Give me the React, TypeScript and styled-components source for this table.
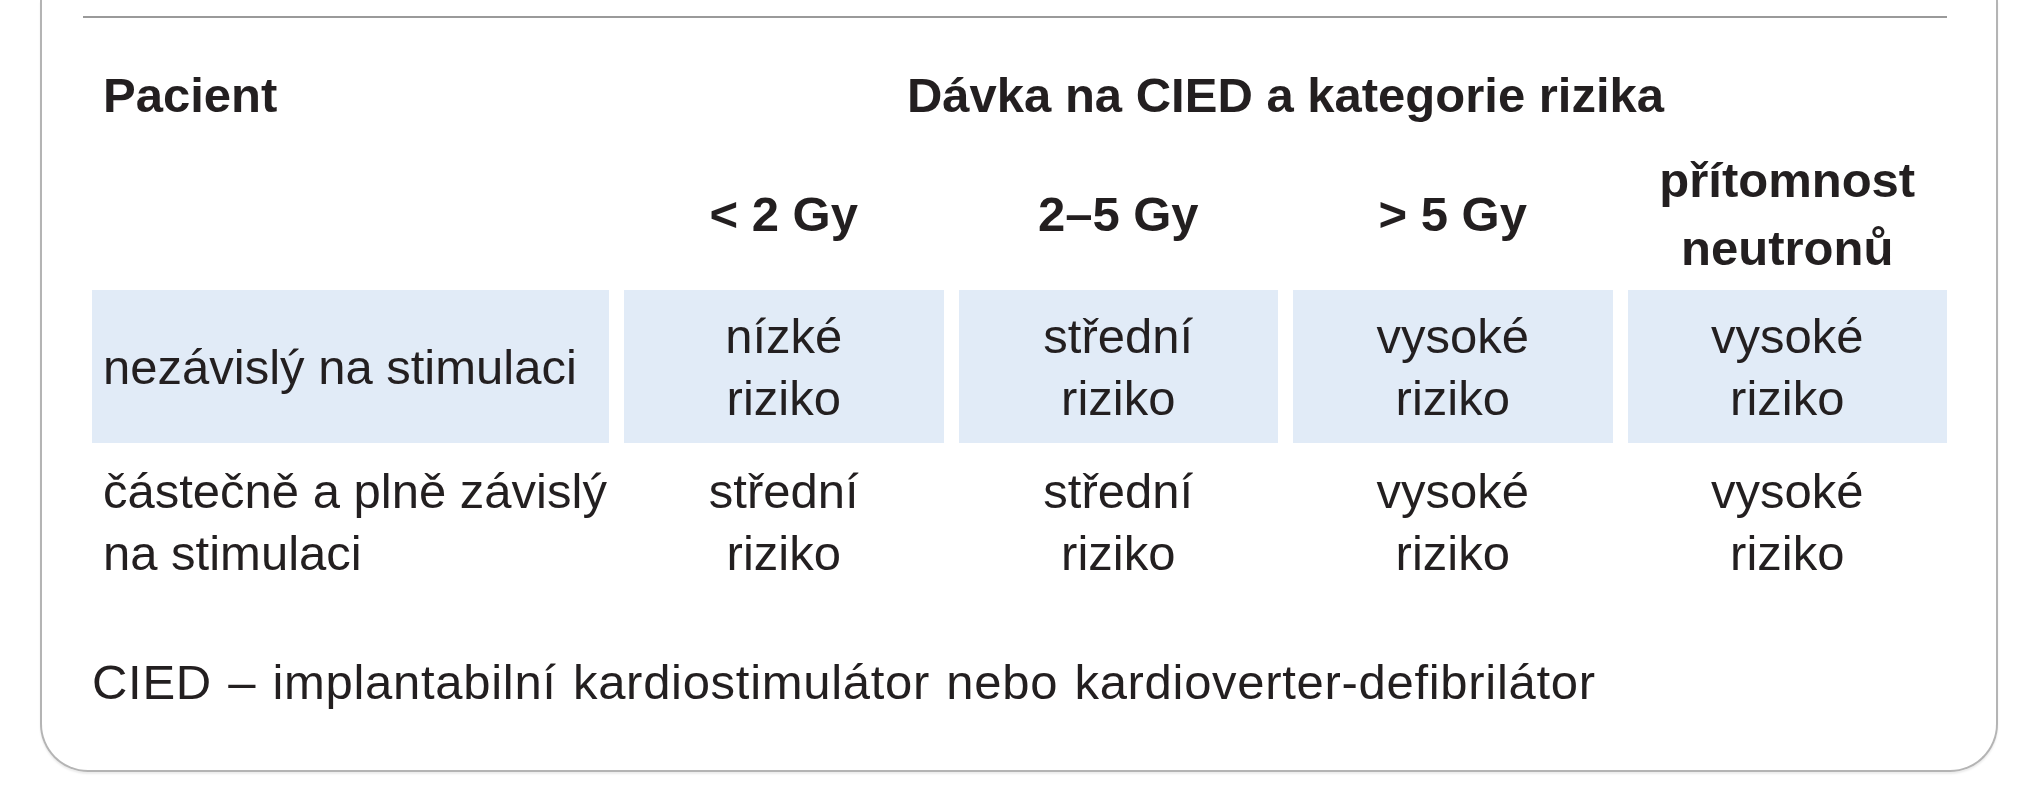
import React, { FC } from "react";
import styled, { createGlobalStyle } from "styled-components";

const GlobalStyle = createGlobalStyle`
  html, body {
    margin: 0;
    padding: 0;
    background: #ffffff;
  }
  body {
    font-family: "Liberation Sans", Arial, sans-serif;
    color: #231f20;
  }
`;

const Page = styled.div`
  width: 2019px;
  height: 800px;
  overflow: hidden;
  padding-left: 40px;
  box-sizing: border-box;
`;

const Box = styled.div`
  width: 1958px;
  box-sizing: border-box;
  border: 2px solid #b4b4b4;
  border-top: none;
  border-radius: 0 0 48px 48px;
  box-shadow: 0 2px 2px rgba(0, 0, 0, 0.08);
  padding: 16px 49px 57px 41px;
`;

const Rule = styled.div`
  height: 2px;
  background: #9a9a9a;
`;

const Table = styled.div`
  display: flex;
  flex-direction: column;
  margin-left: 9px;
`;

const Row = styled.div<{ $top: number }>`
  display: grid;
  grid-template-columns: 517px repeat(4, 1fr);
  column-gap: 15px;
  margin-top: ${(p) => p.$top}px;
`;

const HeadCell = styled.div<{ $span?: boolean; $center?: boolean }>`
  font-size: 49px;
  font-weight: 700;
  line-height: 62px;
  padding: 0 11px;
  text-align: ${(p) => (p.$center ? "center" : "left")};
  grid-column: ${(p) => (p.$span ? "2 / 6" : "auto")};
`;

const DoseCell = styled.div`
  font-size: 49px;
  font-weight: 700;
  line-height: 68px;
  min-height: 136px;
  display: flex;
  align-items: center;
  justify-content: center;
  text-align: center;
`;

const Cell = styled.div<{ $shaded?: boolean; $left?: boolean }>`
  font-size: 49px;
  line-height: 62px;
  padding: 14px ${(p) => (p.$left ? "0 14px 11px" : "11px")};
  min-height: 125px;
  display: flex;
  align-items: center;
  justify-content: ${(p) => (p.$left ? "flex-start" : "center")};
  text-align: ${(p) => (p.$left ? "left" : "center")};
  white-space: nowrap;
  background: ${(p) => (p.$shaded ? "#e1ebf7" : "transparent")};
`;

const Note = styled.p`
  margin: 53px 0 0 9px;
  font-size: 49px;
  line-height: 62px;
  word-spacing: 2px;
  letter-spacing: 0.7px;
`;

interface IRisk {
  patient: React.ReactNode;
  risks: string[];
  shaded: boolean;
}

const doses: React.ReactNode[] = [
  "< 2 Gy",
  "2–5 Gy",
  "> 5 Gy",
  <>
    přítomnost
    <br />
    neutronů
  </>,
];

const rows: IRisk[] = [
  {
    patient: "nezávislý na stimulaci",
    risks: ["nízké", "střední", "vysoké", "vysoké"],
    shaded: true,
  },
  {
    patient: (
      <>
        částečně a plně závislý
        <br />
        na stimulaci
      </>
    ),
    risks: ["střední", "střední", "vysoké", "vysoké"],
    shaded: false,
  },
];

const App: FC = () => {
  return (
    <Page>
      <GlobalStyle />
      <Box>
        <Rule />
        <Table>
          <Row $top={46}>
            <HeadCell>Pacient</HeadCell>
            <HeadCell $span $center>
              Dávka na CIED a kategorie rizika
            </HeadCell>
          </Row>
          <Row $top={20}>
            <div />
            {doses.map((dose, idx) => (
              <DoseCell key={idx}>{dose}</DoseCell>
            ))}
          </Row>
          {rows.map((row, idx) => (
            <Row key={idx} $top={idx === 0 ? 8 : 2}>
              <Cell $shaded={row.shaded} $left>
                <span>{row.patient}</span>
              </Cell>
              {row.risks.map((risk, rIdx) => (
                <Cell key={rIdx} $shaded={row.shaded}>
                  <span>
                    {risk}
                    <br />
                    riziko
                  </span>
                </Cell>
              ))}
            </Row>
          ))}
        </Table>
        <Note>CIED – implantabilní kardiostimulátor nebo kardioverter-defibrilátor</Note>
      </Box>
    </Page>
  );
};

export default App;
